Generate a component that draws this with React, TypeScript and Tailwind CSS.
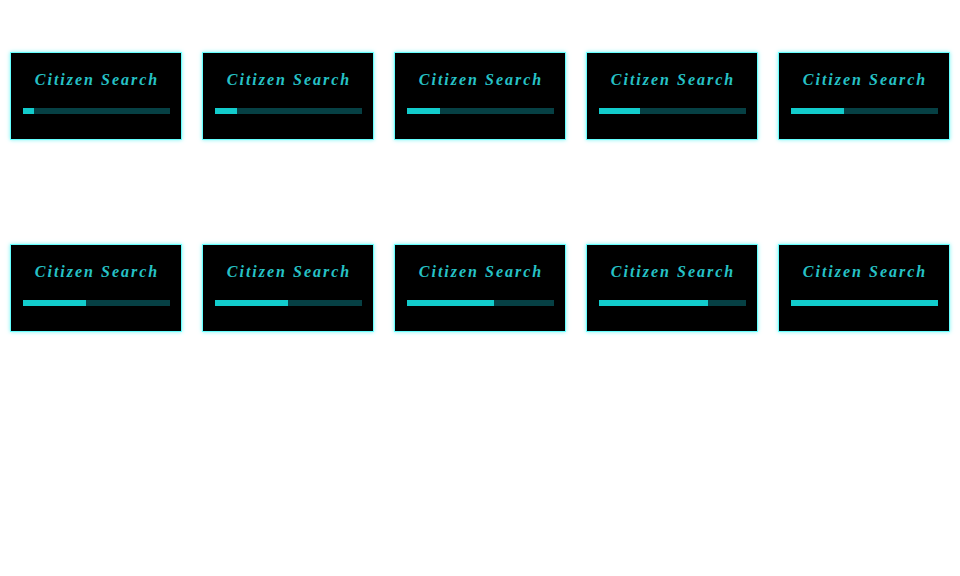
import React from "react";

const fills = [11, 22, 33, 41, 53, 63, 73, 87, 109, 147];

function Card({ fill }: { fill: number }) {
  return (
    <div className="w-[192px] h-[192px] flex items-center justify-center">
      <div className="w-[172px] h-[88px] bg-black border border-[#66ffff] shadow-[0_0_4px_#7ff5f5] flex flex-col items-center">
        <div
          className="mt-[17px] h-[20px] leading-[20px] text-[16px] italic font-bold tracking-[2px] pl-[2px] text-[#26c2c6]"
          style={{ fontFamily: '"Liberation Serif", "DejaVu Serif", serif' }}
        >
          Citizen Search
        </div>
        <div className="mt-[18px] w-[147px] h-[6px] bg-[#064044]">
          <div className="h-full bg-[#12cccc]" style={{ width: `${fill}px` }} />
        </div>
      </div>
    </div>
  );
}

export default function App() {
  return (
    <div className="w-[960px] h-[576px] bg-white flex flex-wrap content-start">
      {fills.map((f, i) => (
        <Card key={i} fill={f} />
      ))}
    </div>
  );
}
